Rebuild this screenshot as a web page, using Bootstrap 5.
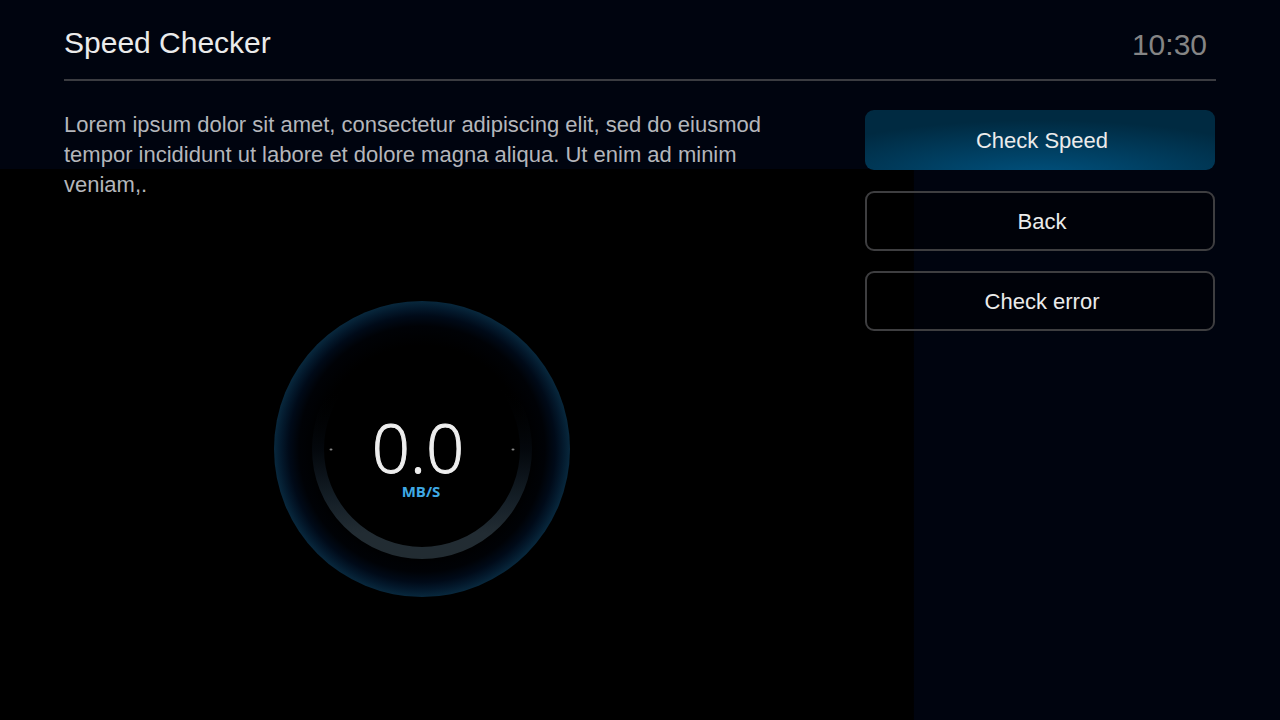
<!DOCTYPE html>
<html lang="en">
<head>
<meta charset="utf-8">
<meta name="viewport" content="width=device-width, initial-scale=1">
<title>Speed Checker</title>
<link rel="stylesheet" href="https://cdn.jsdelivr.net/npm/bootstrap@5.3.0/dist/css/bootstrap.min.css">
<style>
  body {
    min-height: 100vh;
    color: #ebebeb;
    font-family: "Liberation Sans", Arial, sans-serif;
    background: #00040f linear-gradient(#000, #000) no-repeat left bottom / 71.4% calc(100% - 169px);
  }
  .screen { padding: 0 64px; }
  .top-bar { height: 81px; padding: 6px 9px 0 0; border-bottom: 2px solid #3b3c41; }
  .screen-title { font-size: 30px; line-height: 36px; font-weight: 400; }
  .clock { font-size: 30px; line-height: 36px; color: #858585; padding-top: 4px; }
  .content { padding-top: 29px; }
  .info { flex: 0 1 716px; }
  .intro { font-size: 22px; line-height: 30px; color: #b4b6bb; }
  .gauge { width: 296px; margin-top: 101px; }
  .gauge-value { font: 300 67px "Open Sans", sans-serif; fill: #eee; stroke: #eee; stroke-width: 1px; }
  .gauge-unit { font: 700 15px "Open Sans", sans-serif; fill: #3fa9e5; }
  .actions { flex: 0 0 351px; padding-right: 1px; gap: 20px; }
  .btn-action {
    --bs-btn-color: #ebebeb;
    --bs-btn-bg: rgba(0, 0, 0, .4);
    --bs-btn-border-color: #3e3e40;
    --bs-btn-border-width: 2px;
    --bs-btn-border-radius: 9px;
    --bs-btn-font-size: 22px;
    --bs-btn-hover-color: #fff;
    --bs-btn-hover-border-color: #0b5c88;
    height: 60px;
    padding: 0 8px 0 12px;
  }
  .btn-action.is-focused {
    --bs-btn-border-width: 0;
    margin-bottom: 1px;
    background: radial-gradient(ellipse 75% 95% at 50% 112%, #00527f, #003e60 50%, #002a41);
  }
</style>
</head>
<body>
<div class="screen">
  <header class="top-bar d-flex justify-content-between align-items-center">
    <h1 class="screen-title mb-0">Speed Checker</h1>
    <time class="clock">10:30</time>
  </header>
  <main class="content d-flex justify-content-between">
    <section class="info">
      <p class="intro mb-0">Lorem ipsum dolor sit amet, consectetur adipiscing elit, sed do eiusmod tempor incididunt ut labore et dolore magna aliqua. Ut enim ad minim veniam,.</p>
      <svg class="gauge d-block mx-auto" viewBox="0 0 296 296" role="img" aria-label="0.0 MB/S">
        <defs>
          <radialGradient id="halo">
            <stop offset=".7" stop-color="#000"/>
            <stop offset=".83" stop-color="#000206"/>
            <stop offset=".9" stop-color="#000a18"/>
            <stop offset=".95" stop-color="#03182b"/>
            <stop offset="1" stop-color="#08283d"/>
          </radialGradient>
          <linearGradient id="track" gradientUnits="userSpaceOnUse" x1="0" y1="85" x2="0" y2="258">
            <stop offset="0" stop-color="#000" stop-opacity="0"/>
            <stop offset=".38" stop-color="#04080d"/>
            <stop offset=".65" stop-color="#141e26"/>
            <stop offset=".85" stop-color="#222c33"/>
            <stop offset="1" stop-color="#222c32"/>
          </linearGradient>
        </defs>
        <circle cx="148" cy="148" r="148" fill="url(#halo)"/>
        <circle cx="148" cy="148" r="104" fill="none" stroke="url(#track)" stroke-width="12"/>
        <ellipse cx="57" cy="148.500" rx="1.500" ry="1" fill="#858585"/>
        <ellipse cx="239" cy="148.500" rx="1.500" ry="1" fill="#858585"/>
        <text class="gauge-value" x="144" y="172" text-anchor="middle">0.0</text>
        <text class="gauge-unit" x="147" y="196" text-anchor="middle">MB/S</text>
      </svg>
    </section>
    <nav class="actions d-flex flex-column" aria-label="Actions">
      <button type="button" class="btn btn-action is-focused">Check Speed</button>
      <button type="button" class="btn btn-action">Back</button>
      <button type="button" class="btn btn-action">Check error</button>
    </nav>
  </main>
</div>
<script src="https://cdn.jsdelivr.net/npm/bootstrap@5.3.0/dist/js/bootstrap.bundle.min.js"></script>
</body>
</html>
